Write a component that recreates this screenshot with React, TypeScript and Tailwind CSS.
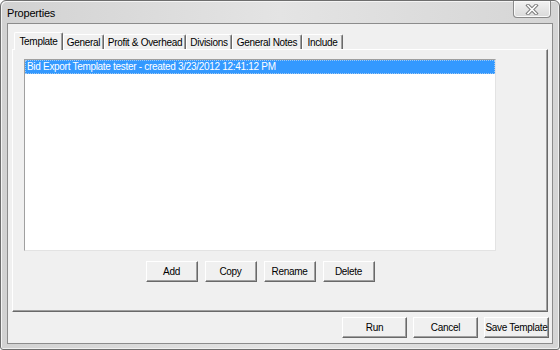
import React from "react";

const ui = "font-['Liberation_Sans',Arial,sans-serif] text-[10px] tracking-[-0.3px] whitespace-nowrap text-black";

const tabs = [
  { label: "Template", w: "w-[49px]" },
  { label: "General", w: "w-[41px]" },
  { label: "Profit & Overhead", w: "w-[82px]" },
  { label: "Divisions", w: "w-[46px]" },
  { label: "General Notes", w: "w-[70px]" },
  { label: "Include", w: "w-[41px]" },
];

function Button({ label, className }: { label: string; className: string }) {
  return (
    <button
      className={`flex h-[21px] items-center justify-center border border-t-white border-l-white border-r-[#696969] border-b-[#696969] bg-[#f0f0f0] shadow-[inset_-1px_-1px_0_#a0a0a0] ${className}`}
    >
      {label}
    </button>
  );
}

function CloseGlyph() {
  return (
    <svg width="14" height="11" viewBox="0 0 14 11">
      <path d="M3 1.5 L11 9.5 M11 1.5 L3 9.5" stroke="#7b7b7b" strokeWidth="3.6" strokeLinecap="square" />
      <path d="M3 1.5 L11 9.5 M11 1.5 L3 9.5" stroke="#ffffff" strokeWidth="1.6" strokeLinecap="square" />
    </svg>
  );
}

export default function App() {
  return (
    <div className={`h-[350px] w-[560px] ${ui}`}>
      <div className="flex h-full w-full flex-col rounded-t-[6px] rounded-b-[3px] border border-[#6e6e6e] bg-linear-to-r from-[#d2d2d2] via-[#e4e4e4] to-[#d5d5d5] shadow-[inset_1px_1px_0_#f4f4f4,inset_-1px_-1px_0_#f0f0f0]">
        {/* title bar */}
        <div className="flex h-[22px] items-start justify-between pl-[6px] pr-[8px]">
          <span className="pt-[5px] text-[11px] leading-[14px] tracking-[-0.2px]">Properties</span>
          <div className="flex h-[17px] w-[38px] items-center justify-center rounded-b-[4px] border border-t-0 border-[#8a8a8a] bg-linear-to-b from-[#f2f2f2] to-[#dadada] shadow-[inset_0_0_0_1px_#fafafa]">
            <CloseGlyph />
          </div>
        </div>

        {/* client area */}
        <div className="mx-[6px] mb-[5px] flex flex-1 flex-col border border-[#8c8c8c] bg-[#f0f0f0]">
          <div className="relative z-10 ml-[6px] mt-[8px] flex h-[17px] items-start">
            {tabs.map((t, i) =>
              i === 0 ? (
                <div
                  key={t.label}
                  className={`flex h-[18px] items-center justify-center rounded-t-[2px] border-t border-l border-r border-t-white border-l-white border-r-[#696969] bg-[#f0f0f0] pb-[1px] shadow-[inset_-1px_0_0_#a0a0a0] ${t.w}`}
                >
                  {t.label}
                </div>
              ) : (
                <div
                  key={t.label}
                  className={`mt-[2px] flex h-[15px] items-center justify-center rounded-t-[2px] border-t border-l border-r border-t-white border-l-white border-r-[#696969] shadow-[inset_-1px_0_0_#a0a0a0] ${t.w}`}
                >
                  {t.label}
                </div>
              )
            )}
          </div>

          <div className="ml-[4px] mr-[4px] flex-1 border border-t-white border-l-white border-r-[#696969] border-b-[#696969] pl-[11px] pt-[9px] shadow-[inset_-1px_-1px_0_#a0a0a0]">
            <div className="flex w-[472px] flex-col">
              <div className="h-[192px] border border-t-[#a0a0a0] border-l-[#a0a0a0] border-r-[#e3e3e3] border-b-[#e3e3e3] bg-white">
                <div className="h-[14px] border border-dotted border-[#9fc8f2] bg-[#3399ff] pl-[1px] leading-[12px] text-white">
                  Bid Export Template tester - created 3/23/2012 12:41:12 PM
                </div>
              </div>
              <div className="mt-[10px] flex justify-center gap-[7px]">
                <Button label="Add" className="w-[52px]" />
                <Button label="Copy" className="w-[52px]" />
                <Button label="Rename" className="w-[52px]" />
                <Button label="Delete" className="w-[52px]" />
              </div>
            </div>
          </div>

          <div className="mb-[5px] mr-[3px] mt-[5px] flex justify-end gap-[6px]">
            <Button label="Run" className="w-[65px]" />
            <Button label="Cancel" className="w-[65px]" />
            <Button label="Save Template" className="w-[65px]" />
          </div>
        </div>
      </div>
    </div>
  );
}
